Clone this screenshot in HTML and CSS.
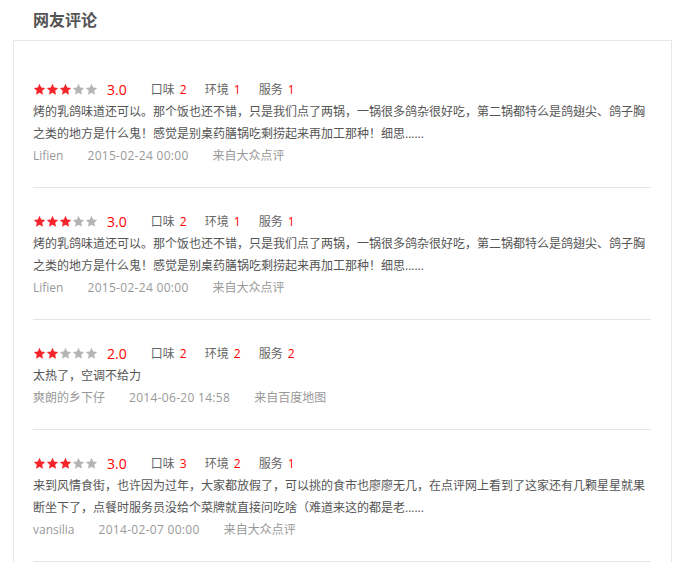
FILE: index.html
```html
<!DOCTYPE html>
<html lang="zh-CN">
<head>
    <meta charset="UTF-8">
    <title>网友评论</title>
    <link rel="stylesheet" href="styles.css">
</head>
<body>
    <div class="comments">
        <h3 class="comments-title">网友评论</h3>
        <div class="comments-box">
            <div class="review">
                <div class="review-rate">
                    <span class="stars">
                        <svg class="star on" viewBox="0 0 24 24"><polygon points="12,1.5 15.1,8.3 22.5,9.1 17,14.1 18.5,21.5 12,17.8 5.5,21.5 7,14.1 1.5,9.1 8.9,8.3"/></svg>
                        <svg class="star on" viewBox="0 0 24 24"><polygon points="12,1.5 15.1,8.3 22.5,9.1 17,14.1 18.5,21.5 12,17.8 5.5,21.5 7,14.1 1.5,9.1 8.9,8.3"/></svg>
                        <svg class="star on" viewBox="0 0 24 24"><polygon points="12,1.5 15.1,8.3 22.5,9.1 17,14.1 18.5,21.5 12,17.8 5.5,21.5 7,14.1 1.5,9.1 8.9,8.3"/></svg>
                        <svg class="star" viewBox="0 0 24 24"><polygon points="12,1.5 15.1,8.3 22.5,9.1 17,14.1 18.5,21.5 12,17.8 5.5,21.5 7,14.1 1.5,9.1 8.9,8.3"/></svg>
                        <svg class="star" viewBox="0 0 24 24"><polygon points="12,1.5 15.1,8.3 22.5,9.1 17,14.1 18.5,21.5 12,17.8 5.5,21.5 7,14.1 1.5,9.1 8.9,8.3"/></svg>
                    </span>
                    <span class="score">3.0</span>
                    <span class="item">口味 <em>2</em></span>
                    <span class="item">环境 <em>1</em></span>
                    <span class="item">服务 <em>1</em></span>
                </div>
                <p class="review-text">烤的乳鸽味道还可以。那个饭也还不错，只是我们点了两锅，一锅很多鸽杂很好吃，第二锅都特么是鸽翅尖、鸽子胸之类的地方是什么鬼！感觉是别桌药膳锅吃剩捞起来再加工那种！细思......</p>
                <div class="review-meta">
                    <span>Lifien</span>
                    <span class="date">2015-02-24 00:00</span>
                    <span>来自大众点评</span>
                </div>
            </div>

            <div class="review">
                <div class="review-rate">
                    <span class="stars">
                        <svg class="star on" viewBox="0 0 24 24"><polygon points="12,1.5 15.1,8.3 22.5,9.1 17,14.1 18.5,21.5 12,17.8 5.5,21.5 7,14.1 1.5,9.1 8.9,8.3"/></svg>
                        <svg class="star on" viewBox="0 0 24 24"><polygon points="12,1.5 15.1,8.3 22.5,9.1 17,14.1 18.5,21.5 12,17.8 5.5,21.5 7,14.1 1.5,9.1 8.9,8.3"/></svg>
                        <svg class="star on" viewBox="0 0 24 24"><polygon points="12,1.5 15.1,8.3 22.5,9.1 17,14.1 18.5,21.5 12,17.8 5.5,21.5 7,14.1 1.5,9.1 8.9,8.3"/></svg>
                        <svg class="star" viewBox="0 0 24 24"><polygon points="12,1.5 15.1,8.3 22.5,9.1 17,14.1 18.5,21.5 12,17.8 5.5,21.5 7,14.1 1.5,9.1 8.9,8.3"/></svg>
                        <svg class="star" viewBox="0 0 24 24"><polygon points="12,1.5 15.1,8.3 22.5,9.1 17,14.1 18.5,21.5 12,17.8 5.5,21.5 7,14.1 1.5,9.1 8.9,8.3"/></svg>
                    </span>
                    <span class="score">3.0</span>
                    <span class="item">口味 <em>2</em></span>
                    <span class="item">环境 <em>1</em></span>
                    <span class="item">服务 <em>1</em></span>
                </div>
                <p class="review-text">烤的乳鸽味道还可以。那个饭也还不错，只是我们点了两锅，一锅很多鸽杂很好吃，第二锅都特么是鸽翅尖、鸽子胸之类的地方是什么鬼！感觉是别桌药膳锅吃剩捞起来再加工那种！细思......</p>
                <div class="review-meta">
                    <span>Lifien</span>
                    <span class="date">2015-02-24 00:00</span>
                    <span>来自大众点评</span>
                </div>
            </div>

            <div class="review">
                <div class="review-rate">
                    <span class="stars">
                        <svg class="star on" viewBox="0 0 24 24"><polygon points="12,1.5 15.1,8.3 22.5,9.1 17,14.1 18.5,21.5 12,17.8 5.5,21.5 7,14.1 1.5,9.1 8.9,8.3"/></svg>
                        <svg class="star on" viewBox="0 0 24 24"><polygon points="12,1.5 15.1,8.3 22.5,9.1 17,14.1 18.5,21.5 12,17.8 5.5,21.5 7,14.1 1.5,9.1 8.9,8.3"/></svg>
                        <svg class="star" viewBox="0 0 24 24"><polygon points="12,1.5 15.1,8.3 22.5,9.1 17,14.1 18.5,21.5 12,17.8 5.5,21.5 7,14.1 1.5,9.1 8.9,8.3"/></svg>
                        <svg class="star" viewBox="0 0 24 24"><polygon points="12,1.5 15.1,8.3 22.5,9.1 17,14.1 18.5,21.5 12,17.8 5.5,21.5 7,14.1 1.5,9.1 8.9,8.3"/></svg>
                        <svg class="star" viewBox="0 0 24 24"><polygon points="12,1.5 15.1,8.3 22.5,9.1 17,14.1 18.5,21.5 12,17.8 5.5,21.5 7,14.1 1.5,9.1 8.9,8.3"/></svg>
                    </span>
                    <span class="score">2.0</span>
                    <span class="item">口味 <em>2</em></span>
                    <span class="item">环境 <em>2</em></span>
                    <span class="item">服务 <em>2</em></span>
                </div>
                <p class="review-text">太热了，空调不给力</p>
                <div class="review-meta">
                    <span>爽朗的乡下仔</span>
                    <span class="date">2014-06-20 14:58</span>
                    <span>来自百度地图</span>
                </div>
            </div>

            <div class="review">
                <div class="review-rate">
                    <span class="stars">
                        <svg class="star on" viewBox="0 0 24 24"><polygon points="12,1.5 15.1,8.3 22.5,9.1 17,14.1 18.5,21.5 12,17.8 5.5,21.5 7,14.1 1.5,9.1 8.9,8.3"/></svg>
                        <svg class="star on" viewBox="0 0 24 24"><polygon points="12,1.5 15.1,8.3 22.5,9.1 17,14.1 18.5,21.5 12,17.8 5.5,21.5 7,14.1 1.5,9.1 8.9,8.3"/></svg>
                        <svg class="star on" viewBox="0 0 24 24"><polygon points="12,1.5 15.1,8.3 22.5,9.1 17,14.1 18.5,21.5 12,17.8 5.5,21.5 7,14.1 1.5,9.1 8.9,8.3"/></svg>
                        <svg class="star" viewBox="0 0 24 24"><polygon points="12,1.5 15.1,8.3 22.5,9.1 17,14.1 18.5,21.5 12,17.8 5.5,21.5 7,14.1 1.5,9.1 8.9,8.3"/></svg>
                        <svg class="star" viewBox="0 0 24 24"><polygon points="12,1.5 15.1,8.3 22.5,9.1 17,14.1 18.5,21.5 12,17.8 5.5,21.5 7,14.1 1.5,9.1 8.9,8.3"/></svg>
                    </span>
                    <span class="score">3.0</span>
                    <span class="item">口味 <em>3</em></span>
                    <span class="item">环境 <em>2</em></span>
                    <span class="item">服务 <em>1</em></span>
                </div>
                <p class="review-text">来到风情食街，也许因为过年，大家都放假了，可以挑的食市也廖廖无几，在点评网上看到了这家还有几颗星星就果断坐下了，点餐时服务员没给个菜牌就直接问吃啥（难道来这的都是老......</p>
                <div class="review-meta">
                    <span>vansilia</span>
                    <span class="date">2014-02-07 00:00</span>
                    <span>来自大众点评</span>
                </div>
            </div>
        </div>
    </div>
</body>
</html>
```

FILE: styles.css
```css
body {
    margin: 0;
    font-family: 'Open Sans', 'Noto Sans CJK SC', sans-serif;
    font-size: 12px;
    color: #666;
    background: #fff;
}

.comments {
    padding: 0 15px 0 13px;
}

.comments-title {
    margin: 0;
    padding: 9px 0 0 20px;
    height: 31px;
    font-size: 16px;
    line-height: 22px;
    font-weight: bold;
    color: #555;
}

.comments-box {
    border: 1px solid #e8e8e8;
    border-bottom: none;
    padding: 15px 20px 0 19px;
}

.review {
    padding: 21px 0 20px;
    border-bottom: 1px solid #e5e5e5;
}

.review-rate {
    display: flex;
    align-items: center;
    height: 24px;
}

.stars {
    display: flex;
    width: 65px;
}

.star {
    width: 13px;
    height: 13px;
    fill: #b4b4b4;
}

.star.on {
    fill: #f5252c;
}

.score {
    margin: 0 24px 0 9px;
    font-size: 14px;
    color: #f00;
}

.item {
    margin-right: 18px;
    color: #666;
}

.item em {
    font-style: normal;
    color: #f00;
    margin-left: 2px;
}

.review-text {
    margin: 0;
    line-height: 22px;
    color: #555;
}

.review-meta {
    display: flex;
    line-height: 22px;
    color: #999;
}

.review-meta span {
    margin-right: 24px;
}

.review-meta .date {
    letter-spacing: 0.3px;
}
```
